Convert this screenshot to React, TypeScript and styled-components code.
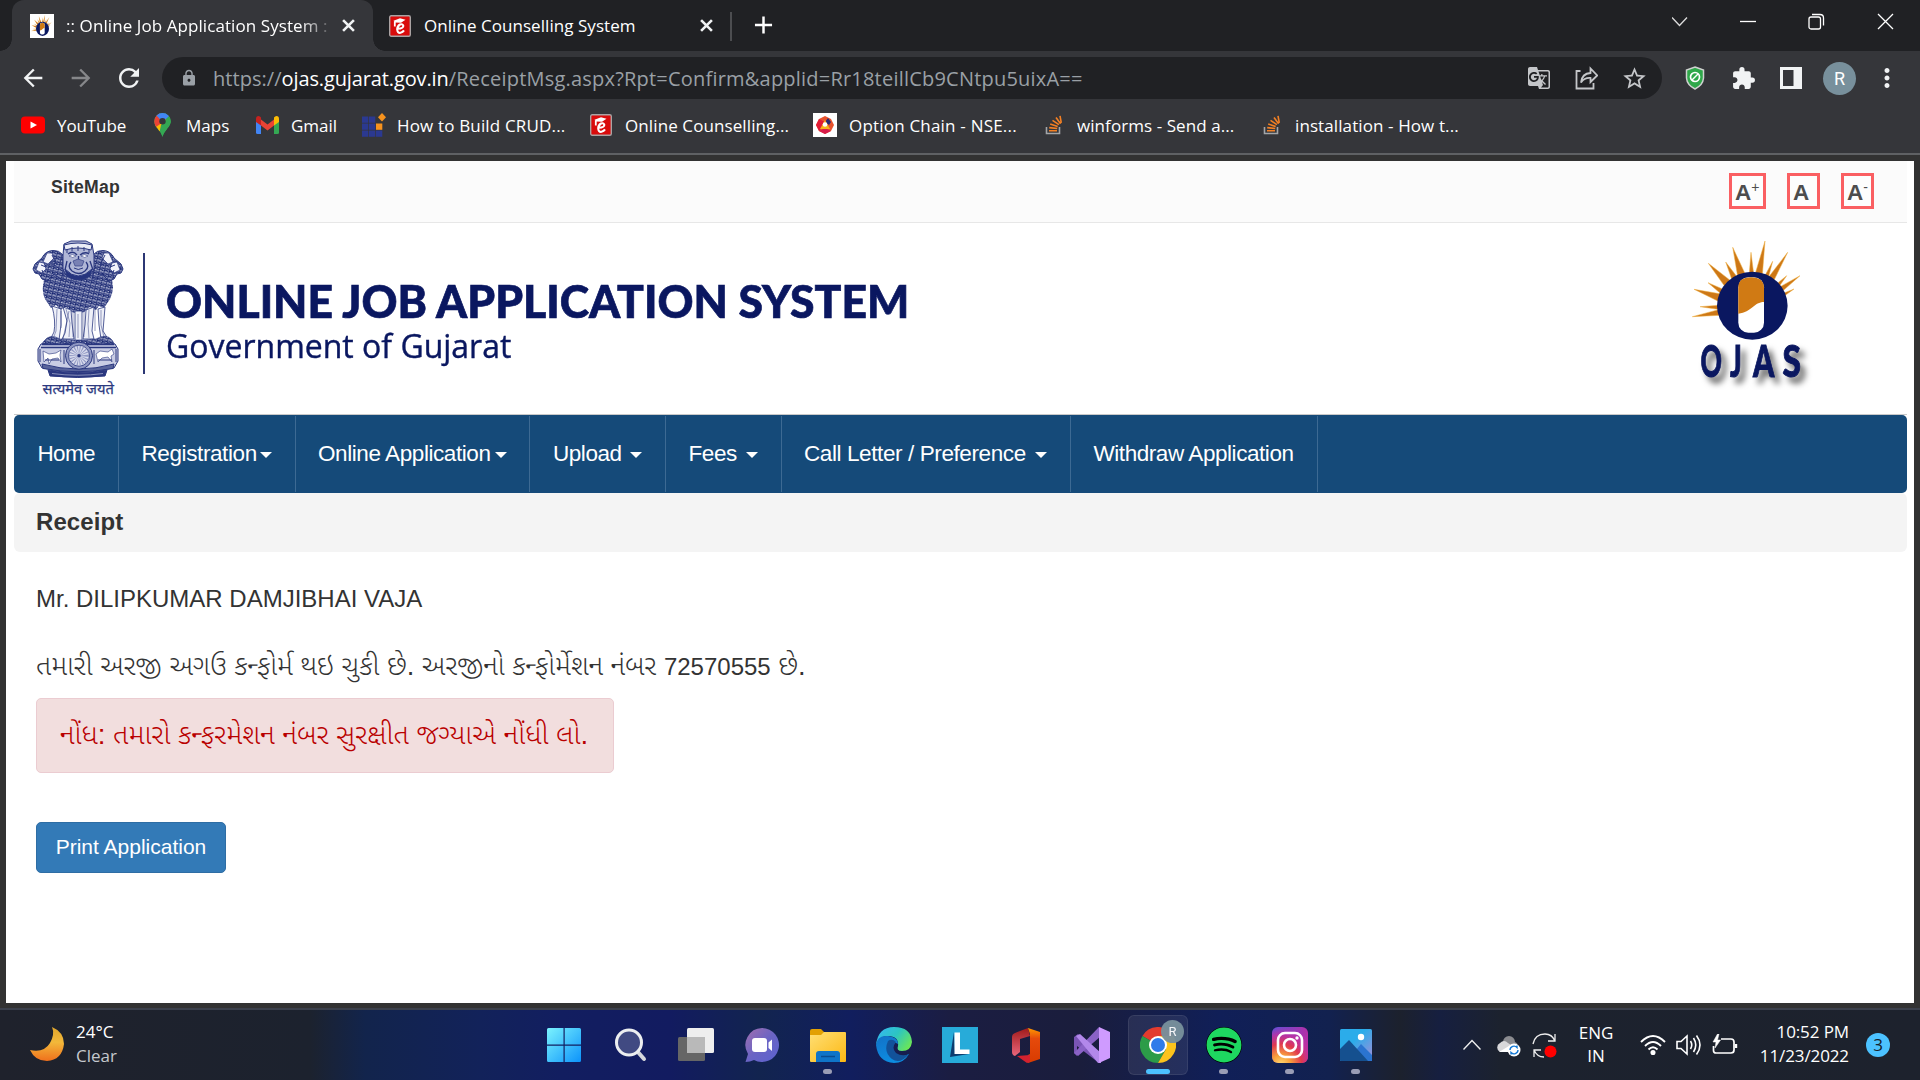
import React from "react";
import styled, { createGlobalStyle } from "styled-components";
import {
  MdArrowBack, MdArrowForward, MdRefresh, MdLock, MdGTranslate,
  MdStarBorder, MdExtension, MdMoreVert,
} from "react-icons/md";
import { FaSpotify } from "react-icons/fa";

const UI = `"Open Sans", "Noto Sans", sans-serif`;
const ARIAL = `"Liberation Sans", Arial, "Noto Sans Gujarati", "Noto Sans", sans-serif`;
const NAVY = "#0a1760";

const Global = createGlobalStyle`
  *, *::before, *::after { box-sizing: border-box; }
  html, body { margin: 0; padding: 0; overflow: hidden; background: #323232; }
  svg { display: block; flex: none; }
`;

const Screen = styled.div`
  width: 1920px;
  height: 1080px;
  display: flex;
  flex-direction: column;
  font-family: ${UI};
  color: #fff;
  background: #323232;
`;

/* ---------- browser tabs ---------- */
const TabStrip = styled.div`
  height: 51px;
  flex: none;
  display: flex;
  background: #202124;
  padding-left: 12px;
`;
const Tab = styled.div<{ $active?: boolean; $w: number; $pad: number }>`
  position: relative;
  width: ${(p) => p.$w}px;
  height: 51px;
  display: flex;
  align-items: center;
  padding-left: ${(p) => p.$pad}px;
  background: ${(p) => (p.$active ? "#35363a" : "transparent")};
  border-radius: 12px 12px 0 0;
  &::before, &::after {
    content: "";
    display: ${(p) => (p.$active ? "block" : "none")};
    position: absolute;
    bottom: 0;
    width: 12px;
    height: 12px;
  }
  &::before { left: -12px; background: radial-gradient(circle at 0 0, transparent 11.5px, #35363a 12px); }
  &::after { right: -12px; background: radial-gradient(circle at 100% 0, transparent 11.5px, #35363a 12px); }
`;
const TabTitle = styled.span<{ $w: number; $fade?: boolean; $ls?: number; $ml?: number }>`
  width: ${(p) => p.$w}px;
  margin-left: ${(p) => p.$ml ?? 12}px;
  font-size: 17px;
  line-height: 24px;
  letter-spacing: ${(p) => p.$ls ?? 0}px;
  white-space: nowrap;
  overflow: hidden;
  ${(p) => p.$fade && `mask-image: linear-gradient(90deg, #000 234px, transparent 270px);`}
`;
const StripDivider = styled.div`
  width: 2px;
  height: 29px;
  margin: 12px 22px 0 0;
  background: #4c4d50;
`;
const PlusWrap = styled.div`padding-top: 15px;`;
const WindowControls = styled.div`
  display: flex;
  align-items: flex-start;
  gap: 52px;
  margin-left: auto;
  padding: 13px 26px 0 0;
`;

/* ---------- toolbar ---------- */
const Toolbar = styled.div`
  height: 54px;
  flex: none;
  display: flex;
  align-items: center;
  padding-left: 19px;
  background: #35363a;
`;
const NavIcon = styled.div<{ $dim?: boolean; $w?: number }>`
  width: ${(p) => p.$w ?? 48}px;
  color: ${(p) => (p.$dim ? "#86878a" : "#f1f3f4")};
`;
const Omnibox = styled.div`
  width: 1500px;
  height: 42px;
  border-radius: 21px;
  background: #202124;
  display: flex;
  align-items: center;
  padding: 0 14px 0 18px;
  color: #9aa0a6;
`;
const Url = styled.div`
  flex: 1;
  margin-left: 15px;
  padding-top: 1px;
  font-size: 20px;
  line-height: 30px;
  letter-spacing: 0.21px;
  white-space: nowrap;
  span { letter-spacing: 0.04px; }
  b { font-weight: 400; color: #fff; letter-spacing: -0.12px; }
`;
const OmniIcons = styled.div`
  display: flex;
  align-items: center;
  gap: 23px;
  color: #c4c6c9;
`;
const Extensions = styled.div`
  display: flex;
  align-items: center;
  margin-left: 23px;
  color: #f1f3f4;
`;
const Slot = styled.div<{ $w: number }>`width: ${(p) => p.$w}px;`;
const Avatar = styled.div<{ $s: number; $fs: number }>`
  width: ${(p) => p.$s}px;
  height: ${(p) => p.$s}px;
  border-radius: 50%;
  background: #78909c;
  color: #fff;
  font: 400 ${(p) => p.$fs}px Roboto, sans-serif;
  display: flex;
  align-items: center;
  justify-content: center;
`;
const Bookmarks = styled.div`
  height: 48px;
  flex: none;
  display: flex;
  align-items: center;
  padding: 0 0 8px 21px;
  background: #35363a;
`;
const Bookmark = styled.div<{ $w: number }>`
  width: ${(p) => p.$w}px;
  height: 30px;
  display: flex;
  align-items: center;
`;
const BookIcon = styled.div<{ $w: number }>`width: ${(p) => p.$w}px; flex: none;`;
const BookText = styled.span<{ $ls?: number }>`
  font-size: 17px;
  letter-spacing: ${(p) => p.$ls ?? 0}px;
  white-space: nowrap;
`;
const ChromeEdge = styled.div`
  height: 8px;
  flex: none;
  border-top: 2px solid #5f6164;
  background: #323232;
`;

/* ---------- web page ---------- */
const Page = styled.main`
  width: 1908px;
  height: 842px;
  flex: none;
  margin-left: 6px;
  padding: 0 7px 0 8px;
  background: #fff;
  color: #333;
  font-family: ${ARIAL};
`;
const TopBar = styled.div`
  height: 62px;
  display: flex;
  justify-content: space-between;
  align-items: flex-start;
  background: #fbfbfb;
  border-bottom: 1px solid #e7e7e7;
  padding: 12px 33px 0 37px;
`;
const SiteMap = styled.a`
  font-size: 17.6px;
  line-height: 28px;
  font-weight: 700;
  letter-spacing: 0.2px;
`;
const SizeButtons = styled.div`display: flex; gap: 21px;`;
const SizeButton = styled.button<{ $w: number }>`
  width: ${(p) => p.$w}px;
  height: 36px;
  padding: 2px 0 0 3px;
  border: 3px solid #fa5f62;
  background: #fdfdfd;
  display: flex;
  align-items: flex-start;
  font: 700 22.5px/30px ${ARIAL};
  color: #4d4d4d;
  sup { font-size: 14px; line-height: 14px; font-weight: 400; margin-top: 2px; }
`;
const Banner = styled.header`
  height: 192px;
  display: flex;
  align-items: flex-start;
  padding-left: 18px;
  border-bottom: 1px solid #c9c9c9;
`;
const EmblemBox = styled.div`margin-top: 18px;`;
const Rule = styled.div`
  width: 2px;
  height: 121px;
  margin: 30px 0 0 18px;
  background: #2c3774;
`;
const TitleBlock = styled.div`
  flex: 1;
  margin: 54px 0 0 21px;
  color: ${NAVY};
  font-family: ${UI};
`;
const Title = styled.h1`
  margin: 0;
  font-family: Lato, ${UI};
  font-size: 45.5px;
  line-height: 48px;
  font-weight: 900;
  white-space: nowrap;
  transform-origin: 0 0;
  transform: scaleX(0.977);
  -webkit-text-stroke: 0.7px ${NAVY};
`;
const Subtitle = styled.h2`
  margin: 0;
  font-size: 33.5px;
  line-height: 40px;
  font-weight: 400;
  white-space: nowrap;
  transform-origin: 0 0;
  transform: scaleX(0.955);
  -webkit-text-stroke: 0.4px ${NAVY};
`;
const LogoBox = styled.div`margin: 17px 93px 0 0;`;

const NavBar = styled.nav`
  height: 78px;
  display: flex;
  padding: 1px 0;
  background: #154a79;
  border-radius: 5px;
`;
const NavItem = styled.a<{ $w: number; $pad: number; $gap: number; $ls: number }>`
  width: ${(p) => p.$w}px;
  display: flex;
  align-items: center;
  gap: ${(p) => p.$gap}px;
  padding: 0 0 1px ${(p) => p.$pad}px;
  border-right: 1px solid #3d6a93;
  color: #fff;
  font-size: 22.5px;
  letter-spacing: ${(p) => p.$ls}px;
  white-space: nowrap;
`;
const Caret = styled.i`
  margin-top: 3px;
  border: 6px solid transparent;
  border-top-color: #fff;
  border-bottom: 0;
`;
const Heading = styled.h3`
  height: 59px;
  margin: 0;
  padding-left: 22px;
  border-radius: 6px;
  background: #f4f4f4;
  font-size: 24px;
  line-height: 57px;
  font-weight: 700;
  letter-spacing: 0.08px;
`;
const Content = styled.section`
  display: flex;
  flex-direction: column;
  align-items: flex-start;
  padding: 30px 0 0 22px;
`;
const Line = styled.p<{ $mt?: number; $fs?: number }>`
  margin: ${(p) => p.$mt ?? 0}px 0 0;
  height: 33px;
  font-size: ${(p) => p.$fs ?? 24}px;
  line-height: 33px;
  font-weight: 300;
  white-space: nowrap;
`;
const Figure = styled.span`font-size: 24px;`;
const Alert = styled.div`
  width: 578px;
  height: 75px;
  margin-top: 16px;
  padding: 19px 0 0 23px;
  border: 1px solid #ebccd1;
  border-radius: 5px;
  background: #f2dede;
  color: #b90000;
`;
const Print = styled.button`
  width: 190px;
  height: 51px;
  margin-top: 49px;
  padding: 0 0 1px;
  border: 1px solid #2e6da4;
  border-radius: 5px;
  background: #337ab7;
  color: #fff;
  font: 400 21px ${ARIAL};
  white-space: nowrap;
`;

/* ---------- taskbar ---------- */
const PageFoot = styled.div`height: 5px; flex: none; background: #323232;`;
const Taskbar = styled.footer`
  height: 72px;
  flex: none;
  display: flex;
  align-items: center;
  border-top: 2px solid #3b404c;
  background: linear-gradient(90deg, #1f222c 0, #1c222e 310px, #12244c 365px, #12225a 480px, #121e60 560px,
    #121b60 670px, #12244f 760px, #111e5e 850px, #1b1d42 950px, #1a1d3c 1080px, #101f58 1220px, #12214f 1330px, #1c212d 1400px, #161f40 1440px, #1c222e 1500px, #1d222d 1920px);
`;
const Weather = styled.div`
  width: 534px;
  display: flex;
  align-items: center;
  padding: 0 0 2px 30px;
  gap: 12px;
  font-size: 17px;
  line-height: 24px;
  span { display: block; color: #c5c8cd; }
`;
const TaskButton = styled.div<{ $active?: boolean }>`
  position: relative;
  width: 60px;
  height: 60px;
  margin-right: 6px;
  display: flex;
  align-items: center;
  justify-content: center;
  border-radius: 6px;
  ${(p) => p.$active && `
    background: rgba(255,255,255,.08);
    box-shadow: inset 0 0 0 1px rgba(255,255,255,.08);`}
`;
const Running = styled.div<{ $on?: boolean }>`
  position: absolute;
  bottom: 1px;
  left: ${(p) => (p.$on ? 18 : 25)}px;
  width: ${(p) => (p.$on ? 24 : 9)}px;
  height: 5px;
  border-radius: 3px;
  background: ${(p) => (p.$on ? "#4cc2ff" : "#9a9db5")};
`;
const Badge = styled.div`position: absolute; right: 4px; top: 5px; opacity: .96;`;
const Tray = styled.div`
  margin-left: auto;
  display: flex;
  align-items: center;
  padding-right: 30px;
`;
const TrayText = styled.div<{ $w: number; $right?: boolean; $ls?: number }>`
  width: ${(p) => p.$w}px;
  padding-bottom: ${(p) => (p.$right ? 3 : 2)}px;
  font-size: 17px;
  line-height: ${(p) => (p.$right ? 24 : 23)}px;
  letter-spacing: ${(p) => p.$ls ?? -0.1}px;
  text-align: ${(p) => (p.$right ? "right" : "center")};
  white-space: nowrap;
`;
const Notice = styled.div`
  width: 24px;
  height: 24px;
  margin-left: 17px;
  border-radius: 50%;
  background: #4cc2ff;
  color: #14202c;
  font-size: 17px;
  line-height: 23px;
  text-align: center;
`;

/* ---------- drawings ---------- */
const RAYS: [number, number, number][] = [
  [75, 1, 3.6], [97.7, 12.3, 3.2], [110, 35.7, 2.6], [104, 49, 1.5], [96.7, 35.7, 1.8], [82.7, 21.3, 2],
  [61, 12.3, 2.2], [42.7, 7.3, 4], [35.7, 22, 3], [18.3, 23.3, 4.2], [18, 42.7, 2.6], [4, 49.3, 4],
  [10, 66.7, 2.2], [2.3, 76.7, 3],
];
const Rays = () => (
  <>
    {RAYS.map(([x, y, w], i) => {
      const a = Math.atan2(y - 64, x - 62.3);
      const bx = 62.3 + 33 * Math.cos(a);
      const by = 65.7 + 32 * Math.sin(a);
      const nx = -Math.sin(a) * w;
      const ny = Math.cos(a) * w;
      return (
        <path key={i} fill="#cd7716" stroke="#f0b040" strokeWidth=".5"
          d={`M${x} ${y}L${bx + nx} ${by + ny}L${bx - nx} ${by - ny}Z`} />
      );
    })}
  </>
);
const Sun = () => (
  <>
    <Rays />
    <ellipse cx="62.3" cy="65.7" rx="35.3" ry="34" fill={NAVY} />
    <rect x="48.3" y="37.3" width="25.7" height="55.5" rx="10" fill="#fff" />
    <path d="M48.3 73.7V47.3Q48.3 37.3 61 37.3T74 47.3V62C64 62 62 72 48.3 73.7Z" fill="#d07a14" />
  </>
);
const LogoWord = styled.g`
  filter: drop-shadow(5px 6px 3px rgba(0, 0, 0, 0.6));
  fill: ${NAVY};
  stroke: ${NAVY};
  stroke-width: 1px;
  font: 900 44px Lato, sans-serif;
`;
const OjasLogo = () => (
  <svg width="124" height="150" viewBox="0 0 124 150">
    <Sun />
    <LogoWord>
      <text transform="translate(10.500 137) scale(.6 1)">O</text>
      <text transform="translate(40 137) scale(.62 1)">J</text>
      <text transform="translate(63 137) scale(.69 1)">A</text>
      <text transform="translate(92.500 137) scale(.76 1)">S</text>
    </LogoWord>
  </svg>
);
const OjasFavicon = () => (
  <svg width="24" height="24" viewBox="0 0 24 24">
    <rect width="24" height="24" fill="#fff" />
    <g transform="translate(1 1) scale(.185 .21)"><Sun /></g>
  </svg>
);

const Emblem = () => (
  <svg width="93" height="157" viewBox="0 0 93 157" overflow="visible">
    <defs>
      <pattern id="fur" width="5" height="5" patternUnits="userSpaceOnUse" patternTransform="rotate(14)">
        <rect width="5" height="5" fill="#6d76ab" />
        <path d="M0 1Q1.2 3.6 2.5 1.4T5 1M0 3.8Q1.2 5.4 2.5 3.8T5 3.8M2.500 0V2" stroke="#18266f" strokeWidth="1.100" fill="none" />
        <path d="M.4 2.600h1.300M3 2.700h1.500M1 .2h.8" stroke="#fff" strokeWidth=".8" />
      </pattern>
    </defs>
    <g stroke="#2a377f" strokeWidth="1" strokeLinejoin="round">
      <path d="M14 33Q8 48 13 58L19 67 24 64 28 69 34 66 40 71 46 73 52 71 58 66 64 69 67 65 72 67 78 58Q84 46 78 33L64 20H29Z" fill="url(#fur)" stroke="none" />
      <path d="M31 14Q27 9 21 9.500Q13 10 10 17L3 23 1 28 3 32 7 33 10 38 15 40 22 33 31 40Z" fill="url(#fur)" />
      <path d="M61 14Q65 9 71 9.500Q79 10 82 17L89 23 91 28 89 32 85 33 82 38 77 40 70 33 61 40Z" fill="url(#fur)" />
      <path d="M15 12l5 0 2 5-6 6-5-2zM7 21l5 1 2 6-4 4-6-3zM77 12l-5 0-2 5 6 6 5-2zM85 21l-5 1-2 6 4 4 6-3z" fill="#f1f2fa" strokeWidth=".7" />
      <path d="M20 14l5 10M18 22l6 3M9 24l5 2M10 29l2 5M73 14l-5 10M74 22l-6 3M83 24l-5 2M82 29l-2 5" fill="none" />
      <path d="M32 3L39 0H54L60 3L62 14V28Q58 38 46 38T31 28V14Z" fill="#b0b6d6" />
      <path d="M32 4Q46 0 60 4L59 9Q46 5 33 9Z" fill="#e9ebf6" />
      <path d="M36 13q5-4 9 1M48 14q5-4 9-1M46.500 15v6M39 21q-4 5 1 9 7 5 13 0 5-4 1-9M35 20l-2 9M58 20l3 9" fill="none" strokeWidth="1.300" />
      <path d="M37 15q3-3 7 0-3 3-7 0zM49 15q3-3 7 0-3 3-7 0z" fill="#fff" strokeWidth=".6" />
      <path d="M41 20l5-2 6 2-2 5h-7z" fill="#7981b4" strokeWidth=".6" />
      <path d="M42 27q4 3 9 0" fill="none" />
      <path d="M33 28Q46 42 60 28L58 35Q46 43 35 35Z" fill="#26347f" />
      <path d="M35 8v4M40 6v4M46 5v5M52 6v4M57 8v4" />
      <path d="M20 65Q24 80 22 91L18 99H27L29 84V68ZM31 66L35 80 33 92 30 98H42L40 82 39 69ZM43 70V101H50V70ZM54 69L53 84 51 98H62L60 90 62 66ZM66 68L67 84 69 98H76L71 90 73 66Z" fill="#eef0f8" strokeWidth=".8" />
      <path d="M25 68l-1 22-3 8M34 68l4 14-1 14M46 73v24M57 69l-1 14 1 14M69 69v15l3 12M37 70l-6 28M29 70v17M63 68v22M52 70v26M41 70v26" fill="none" strokeWidth=".8" opacity=".6" />
      <path d="M12 100Q18 92 28 98L42 99H52L64 98Q74 92 80 99L83 104H9Z" fill="url(#fur)" strokeWidth=".6" />
      <path d="M9 103H83L86 108V120L82 127Q46 134 10 127L6 120V108Z" fill="#c9cde4" />
      <path d="M10 103.500H82M9 106.500H84" strokeWidth="1.600" />
      <path d="M10 123Q46 133 82 123L81 127.500Q46 134 11 127.500Z" fill="#5a659c" />
      <path d="M11 110l6 3 7-1 5-3-1 5 1 7-3-4-6 1-3 5-1-6-4 4zM64 113l4-3 8 1 4-3 2 5-3 2 1 6-4-5-6 1-4 4z" fill="#fff" strokeWidth=".6" />
      <path d="M8 108v13M84 108v13M32 109v14M62 109v14M13 119h14M66 119h14" fill="none" />
      <circle cx="47" cy="114.700" r="13.500" fill="#8f97c2" />
      <circle cx="47" cy="114.700" r="10.500" fill="#d7daec" strokeWidth=".8" />
      <circle cx="47" cy="114.700" r="6" fill="none" stroke="#9098c4" strokeWidth="8" strokeDasharray=".8 1.200" />
      <circle cx="47" cy="114.700" r="1.600" fill="#2a377f" strokeWidth=".4" />
      <path d="M16 129Q46 134 75 129L73 135Q46 138 18 135Z" fill="#2a377f" />
      <path d="M20 132.500Q46 136 71 132.500" stroke="#8890ba" fill="none" />
    </g>
    <text x="10.500" y="153" textLength="71.500" lengthAdjust="spacingAndGlyphs" fill="#2c3980" stroke="#2c3980" strokeWidth=".25"
      fontSize="14.500" fontFamily="Noto Sans Devanagari, Noto Sans, sans-serif">सत्यमेव जयते</text>
  </svg>
);

const Close = ({ s = 12, w = 2.4 }: { s?: number; w?: number }) => (
  <svg width={s} height={s} viewBox="0 0 12 12" stroke="#f1f3f4" strokeWidth={w}><path d="M1 1L11 11M11 1L1 11" /></svg>
);
const Counselling = () => (
  <svg width="22" height="22" viewBox="0 0 22 22">
    <rect x=".7" y=".7" width="20.600" height="20.600" rx="1.500" fill="#d90b0b" stroke="#aaa3a3" strokeWidth="1.400" />
    <path d="M4.500 5.800L11 3.200l5.500 1.600-4.500 3-6-.3z" fill="#fff" />
    <path d="M5.800 6.500v5" stroke="#fff" strokeWidth="1.800" />
    <path d="M8.500 13.800Q14.500 13.300 14.300 10.800 13.600 8.600 11 9.500 8.200 11.200 8.200 14.500 8.500 18.300 11.500 17.800 13.800 17.300 15 15.400" fill="none" stroke="#fff" strokeWidth="2.100" />
  </svg>
);
const Youtube = () => (
  <svg width="24" height="24" viewBox="0 0 24 24"><rect y="3.500" width="24" height="17" rx="4" fill="#f00" /><path d="M9.500 8.500L16 12l-6.500 3.500z" fill="#fff" /></svg>
);
const MapsPin = () => (
  <svg width="17" height="24" viewBox="0 0 17 24">
    <clipPath id="pin"><path d="M8.500 0A8.300 8.300 0 0 0 .2 8.300C.2 14 6.500 17 8.500 24 10.500 17 16.800 14 16.800 8.300A8.300 8.300 0 0 0 8.500 0Z" /></clipPath>
    <g clipPath="url(#pin)">
      <rect width="17" height="24" fill="#34a853" />
      <path d="M0 14L9 4 14 8 3 21H0Z" fill="#fbbc04" />
      <path d="M0 0H5L9 9 2 14H0Z" fill="#ea4335" />
      <path d="M2 2L8.500 9 15.500 3 12-1H4Z" fill="#4285f4" />
      <path d="M7 12L15.500 2.500 18 8 8 24 6 17Z" fill="#34a853" />
    </g>
    <circle cx="8.500" cy="8.300" r="3.200" fill="#35363a" />
  </svg>
);
const Gmail = () => (
  <svg width="23" height="18" viewBox="0 0 23 18">
    <path d="M0 3V16.500Q0 18 1.500 18H5V7Z" fill="#4285f4" /><path d="M23 3V16.500Q23 18 21.500 18H18V7Z" fill="#34a853" />
    <path d="M5 3.500L11.500 8.500 18 3.500V9.500L11.500 14.500 5 9.500Z" fill="#ea4335" />
    <path d="M0 3Q0 0 2.500 0 4 .2 5 1.500V9.500L0 6Z" fill="#c5221f" /><path d="M23 3Q23 0 20.500 0 19 .2 18 1.500V9.500L23 6Z" fill="#fbbc04" />
  </svg>
);
const Crud = () => (
  <svg width="24" height="24" viewBox="0 0 24 24">
    {[3.5, 10.5, 17.5].map((y, r) => [0, 7, 14].map((x, c) => (
      <rect key={`${x}-${y}`} x={x} y={y} width="6.300" height="6.300"
        fill={c === 2 && r === 1 ? "#f7931e" : c === 2 && r === 0 ? "none" : "#2b3990"} />
    )))}
    <path d="M20 0l4 4.300-4 4.300-4-4.300z" fill="#f7931e" />
  </svg>
);
const Nse = () => (
  <svg width="24" height="24" viewBox="0 0 24 24">
    <rect width="24" height="24" fill="#fff" />
    <path d="M12 3l6 3 3 6-3 6-6 3-6-3-3-6 3-6z" fill="#e8532d" />
    <path d="M6 6l6 3-3 6-3 3-3-6z" fill="#e21b35" /><path d="M6 18l6 3 6-3-6-3z" fill="#d81d4b" />
    <path d="M12 9l3-4 3 4-2 3z" fill="#2a2a72" /><path d="M7 16l5-9 5 9z" fill="#f8b21c" />
    <circle cx="12" cy="11.500" r="2.300" fill="#fff" />
  </svg>
);
const Stack = () => (
  <svg width="18" height="20" viewBox="0 0 18 20" fill="none">
    <path d="M1.500 12v6.500h13V12" stroke="#a3a6a9" strokeWidth="1.600" />
    <path d="M4 15.700h8M4.200 12.600l8 .9M5.200 9.100l7.500 2.300M7.500 5.300l6.400 4.300M11 2.500l4.600 6.200M15 .8l1.300 7" stroke="#f48024" strokeWidth="1.600" />
  </svg>
);

const StartIcon = () => (
  <svg width="34" height="34" viewBox="0 0 34 34">
    <defs><linearGradient id="win" gradientUnits="userSpaceOnUse" x1="0" y1="0" x2="34" y2="34"><stop stopColor="#7bf3fe" /><stop offset="1" stopColor="#0c93fb" /></linearGradient></defs>
    <path d="M1.500 0H16.500V16.500H0V1.500Q0 0 1.500 0ZM17.700 0H32.500Q34 0 34 1.500V16.500H17.700ZM0 17.700H16.500V34H1.500Q0 34 0 32.500ZM17.700 17.700H34V32.500Q34 34 32.500 34H17.700Z" fill="url(#win)" />
  </svg>
);
const SearchIcon = () => (
  <svg width="34" height="34" viewBox="0 0 34 34"><path d="M24 23L31 31" stroke="#d5d7db" strokeWidth="4" strokeLinecap="round" /><circle cx="16" cy="14.500" r="12.500" fill="#414a82" stroke="#eceef0" strokeWidth="3" /></svg>
);
const TaskView = () => (
  <svg width="36" height="34" viewBox="0 0 36 34"><rect y="9" width="27" height="24" rx="1.500" fill="#666" /><rect x="9" width="27" height="25" rx="1.500" fill="#eee" /><path d="M9 9H27V25H9Z" fill="#b9b9b9" /></svg>
);
const Chat = () => (
  <svg width="34" height="34" viewBox="0 0 34 34">
    <defs><linearGradient id="cht" x1="0" y1="0" x2="1" y2="1"><stop stopColor="#a26fae" /><stop offset=".5" stopColor="#6a64c4" /><stop offset="1" stopColor="#5b62d0" /></linearGradient></defs>
    <path d="M17 0a17 17 0 1 1-8 32q-4 2-8.500 2L3 26A17 17 0 0 1 17 0Z" fill="url(#cht)" />
    <rect x="7" y="10" width="15" height="14" rx="3" fill="#fff" /><path d="M23.500 14.500l3.500-3v11.500l-3.500-3z" fill="#fff" />
  </svg>
);
const Explorer = () => (
  <svg width="36" height="33" viewBox="0 0 36 33">
    <defs><linearGradient id="fol" x1="0" y1="0" x2="1" y2="1"><stop stopColor="#ffdf75" /><stop offset="1" stopColor="#fcb813" /></linearGradient></defs>
    <path d="M0 8V2Q0 0 2 0H11L15 4V8Z" fill="#e2a003" /><path d="M0 6H11L14 3H35Q36 3 36 4V32Q36 33 35 33H1Q0 33 0 32Z" fill="url(#fol)" />
    <path d="M6 33V25Q6 22 9 22H27Q30 22 30 25V33Z" fill="#0f74c8" /><path d="M11 27.500H25" stroke="#0a4c90" strokeWidth="1.500" />
  </svg>
);
const Edge = () => (
  <svg width="36" height="36" viewBox="0 0 36 36">
    <defs>
      <linearGradient id="e1" x1="0" y1=".2" x2="1" y2=".7"><stop stopColor="#35b8f0" /><stop offset=".5" stopColor="#2cc5c2" /><stop offset="1" stopColor="#6ce755" /></linearGradient>
      <linearGradient id="e2" x1="0" y1="0" x2=".3" y2="1"><stop stopColor="#1272c8" /><stop offset="1" stopColor="#0d8ce0" /></linearGradient>
    </defs>
    <path d="M0 18Q2 0 18 0 35 0 36 15 35 24 26 24 20 24 22 19 23 9 12 9 3 9 0 18Z" fill="url(#e1)" />
    <path d="M0 18Q1 8 12 9 22 10 22 17 18 14 15 17 11 22 16 28 21 33 33 27 28 36 18 36 2 35 0 18Z" fill="url(#e2)" />
    <path d="M12 14Q7 25 16 32 24 38 33 27 26 30 20 26 15 21 20 15 16 11 12 14Z" fill="#12529a" />
  </svg>
);
const LIcon = () => (
  <svg width="36" height="36" viewBox="0 0 36 36"><rect width="36" height="36" fill="#27abd9" /><path d="M12 5L8 30 27 27 13 26Z" fill="#0d3c6e" /><path d="M12.500 5.500H18V22.500H27.500V27H12.500Z" fill="#fff" /></svg>
);
const Office = () => (
  <svg width="28" height="35" viewBox="0 0 28 35">
    <defs><linearGradient id="of" x1="0" y1="0" x2="0" y2="1"><stop stopColor="#ff9a00" /><stop offset=".3" stopColor="#e64a0b" /><stop offset="1" stopColor="#d83b01" /></linearGradient>
      <linearGradient id="of2" x1="0" y1="0" x2="0" y2="1"><stop stopColor="#a01a1a" /><stop offset="1" stopColor="#e9667c" /></linearGradient></defs>
    <path d="M16 0L18 8 8 11V24L3 28Q0 27 0 24V9Q0 6 3 5Z" fill="url(#of2)" /><path d="M16 0L28 4V31L16 35V27L18 26V6Z" fill="url(#of)" /><path d="M5 28L18 27V34L15 35Z" fill="#d3222f" />
  </svg>
);
const VisualStudio = () => (
  <svg width="36" height="36" viewBox="0 0 36 36">
    <path d="M0 10L4 7 26 28 25 36 3 19V29L0 26Z" fill="#7a55b5" /><path d="M0 26L25 0 27 9 4 29Z" fill="#8a62c6" /><path d="M2 9L6 7 27 26V36H24Z" fill="#b288ea" /><path d="M25 0L36 5V31L25 36Z" fill="#cf9bff" />
  </svg>
);
const Chrome = () => (
  <svg width="36" height="36" viewBox="0 0 36 36">
    <path d="M18 18L2.400 9A18 18 0 0 1 33.600 9Z" fill="#e33b2e" /><path d="M18 18L2.400 9A18 18 0 0 0 18 36L25.800 22.500Z" fill="#2c9c48" />
    <path d="M18 9H33.600A18 18 0 0 1 18 36L25.800 22.500Z" fill="#fcc31c" /><circle cx="18" cy="18" r="9" fill="#fff" /><circle cx="18" cy="18" r="7" fill="#2f7bea" />
  </svg>
);
const Spotify = styled(FaSpotify)`background: #000; border-radius: 50%; color: #1ed760;`;
const Insta = () => (
  <svg width="36" height="36" viewBox="0 0 36 36">
    <defs>
      <linearGradient id="ig0" x1="0" y1="0" x2="1" y2="0"><stop stopColor="#5b51d8" /><stop offset="1" stopColor="#b42fa8" /></linearGradient>
      <radialGradient id="ig1" cx=".25" cy="1.050" r="1.050"><stop stopColor="#fedc77" /><stop offset=".25" stopColor="#f9a23c" /><stop offset=".55" stopColor="#e0394f" /><stop offset=".8" stopColor="#c430a0" stopOpacity=".8" /><stop offset="1" stopColor="#c430a0" stopOpacity="0" /></radialGradient>
    </defs>
    <rect width="36" height="36" rx="6" fill="url(#ig0)" /><rect width="36" height="36" rx="6" fill="url(#ig1)" />
    <g fill="none" stroke="#fff" strokeWidth="2.600"><rect x="6" y="6" width="24" height="24" rx="7" /><circle cx="18" cy="18" r="6" /></g><circle cx="25" cy="11" r="1.700" fill="#fff" />
  </svg>
);
const Photos = () => (
  <svg width="32" height="32" viewBox="0 0 32 32">
    <defs><linearGradient id="ph" x1="0" y1="0" x2="1" y2="1"><stop offset=".4" stopColor="#2bacea" /><stop offset="1" stopColor="#a68cd8" /></linearGradient></defs>
    <rect width="32" height="32" rx="1.500" fill="url(#ph)" /><path d="M12 26L21 15 32 26V32H12Z" fill="#2b74d0" /><path d="M0 20L9 11 28 32H1Q0 32 0 31Z" fill="#15508f" /><circle cx="21" cy="8" r="3.200" fill="#fff" />
  </svg>
);

const bookmarks: { icon: React.ReactNode; iw: number; w: number; text: string; ls?: number }[] = [
  { icon: <Youtube />, iw: 36, w: 133, text: "YouTube", ls: -0.1 },
  { icon: <MapsPin />, iw: 32, w: 102, text: "Maps" },
  { icon: <Gmail />, iw: 35, w: 106, text: "Gmail" },
  { icon: <Crud />, iw: 35, w: 228, text: "How to Build CRUD...", ls: 0.16 },
  { icon: <Counselling />, iw: 35, w: 223, text: "Online Counselling...", ls: 0.1 },
  { icon: <Nse />, iw: 36, w: 232, text: "Option Chain - NSE...", ls: 0.2 },
  { icon: <Stack />, iw: 32, w: 218, text: "winforms - Send a...", ls: 0.07 },
  { icon: <Stack />, iw: 32, w: 200, text: "installation - How t...", ls: 0.1 },
];

const navItems = [
  { t: "Home", w: 105, pad: 23.5, gap: 0, ls: -0.65, caret: false },
  { t: "Registration", w: 177, pad: 22.5, gap: 3, ls: -0.4, caret: true },
  { t: "Online Application", w: 234, pad: 22, gap: 4, ls: -0.42, caret: true },
  { t: "Upload", w: 136, pad: 23, gap: 8, ls: -0.45, caret: true },
  { t: "Fees", w: 116, pad: 22.5, gap: 9, ls: -0.4, caret: true },
  { t: "Call Letter / Preference", w: 289, pad: 22, gap: 9, ls: -0.4, caret: true },
  { t: "Withdraw Application", w: 247, pad: 22.5, gap: 0, ls: -0.44, caret: false },
];

const apps: { icon: React.ReactNode; run?: boolean; active?: boolean }[] = [
  { icon: <StartIcon /> }, { icon: <SearchIcon /> }, { icon: <TaskView /> }, { icon: <Chat /> },
  { icon: <Explorer />, run: true }, { icon: <Edge /> }, { icon: <LIcon /> }, { icon: <Office /> },
  { icon: <VisualStudio /> }, { icon: <Chrome />, run: true, active: true },
  { icon: <Spotify size={36} />, run: true }, { icon: <Insta />, run: true }, { icon: <Photos />, run: true },
];

export default function App() {
  return (
    <Screen>
      <Global />
      <TabStrip>
        <Tab $active $w={361} $pad={18}>
          <OjasFavicon />
          <TabTitle $w={276} $fade $ls={0.08}>:: Online Job Application System :</TabTitle>
          <Slot $w={12}><Close s={13} /></Slot>
        </Tab>
        <Tab $w={357} $pad={16}>
          <Counselling />
          <TabTitle $w={276} $ml={13} $ls={0.05}>Online Counselling System</TabTitle>
          <Close s={13} />
        </Tab>
        <StripDivider />
        <PlusWrap><svg width="19" height="20" viewBox="0 0 20 20" stroke="#fff" strokeWidth="2.600"><path d="M10 1V19M1 10H19" /></svg></PlusWrap>
        <WindowControls>
          <svg width="16" height="16" viewBox="0 0 16 16" fill="none" stroke="#ddd" strokeWidth="1.300"><path d="M0 4.500L7.500 12.500 15 4.500" /></svg>
          <svg width="16" height="16" viewBox="0 0 16 16" stroke="#fff" strokeWidth="1.300"><path d="M0 8.500H16" /></svg>
          <svg width="17" height="17" viewBox="0 0 17 17" fill="none" stroke="#fff" strokeWidth="1.300"><rect x="1" y="4" width="11.500" height="12" rx="2" /><path d="M4 1.500H12Q15.500 1.500 15.500 5V12.500" /></svg>
          <svg width="17" height="17" viewBox="0 0 17 17" stroke="#fff" strokeWidth="1.300"><path d="M1 1L16 16M16 1L1 16" /></svg>
        </WindowControls>
      </TabStrip>

      <Toolbar>
        <NavIcon><MdArrowBack size={28} /></NavIcon>
        <NavIcon $dim $w={47}><MdArrowForward size={28} /></NavIcon>
        <NavIcon><MdRefresh size={30} /></NavIcon>
        <Omnibox>
          <MdLock size={18} />
          <Url><span>https://<b>ojas.gujarat.gov.in</b></span>/ReceiptMsg.aspx?Rpt=Confirm&amp;applid=Rr18teillCb9CNtpu5uixA==</Url>
          <OmniIcons>
            <MdGTranslate size={24} />
            <svg width="24" height="24" viewBox="0 0 24 24" fill="none" stroke="currentColor" strokeWidth="1.800">
              <path d="M6.500 5H2.500V22.500H19.500V17M7 16.500Q8 7.500 16.500 7V2.500L23.200 9.500 16.500 16V12Q10.500 11.500 7 16.500Z" />
            </svg>
            <MdStarBorder size={27} />
          </OmniIcons>
        </Omnibox>
        <Extensions>
          <Slot $w={46}>
            <svg width="20" height="24" viewBox="0 0 20 24"><path d="M10 1L18.500 4V12Q18 19 10 23 2 19 1.500 12V4Z" fill="#2fa84a" stroke="#cfd2d0" strokeWidth="1.500" /><circle cx="10" cy="11" r="4.500" fill="none" stroke="#fff" strokeWidth="1.700" /><path d="M7 14l6-6" stroke="#fff" strokeWidth="1.500" /></svg>
          </Slot>
          <Slot $w={49}><MdExtension size={25} /></Slot>
          <Slot $w={43}><svg width="22" height="22" viewBox="0 0 22 22"><path d="M0 0H22V22H0ZM3 3V19H13.500V3Z" fill="#f1f3f4" fillRule="evenodd" /></svg></Slot>
          <Slot $w={49}><Avatar $s={33} $fs={18}>R</Avatar></Slot>
          <MdMoreVert size={30} />
        </Extensions>
      </Toolbar>

      <Bookmarks>
        {bookmarks.map((b, i) => (
          <Bookmark key={i} $w={b.w}>
            <BookIcon $w={b.iw}>{b.icon}</BookIcon>
            <BookText $ls={b.ls}>{b.text}</BookText>
          </Bookmark>
        ))}
      </Bookmarks>
      <ChromeEdge />

      <Page>
        <TopBar>
          <SiteMap>SiteMap</SiteMap>
          <SizeButtons>
            <SizeButton $w={37}>A<sup>+</sup></SizeButton>
            <SizeButton $w={33}>A</SizeButton>
            <SizeButton $w={33}>A<sup>-</sup></SizeButton>
          </SizeButtons>
        </TopBar>
        <Banner>
          <EmblemBox><Emblem /></EmblemBox>
          <Rule />
          <TitleBlock>
            <Title>ONLINE JOB APPLICATION SYSTEM</Title>
            <Subtitle>Government of Gujarat</Subtitle>
          </TitleBlock>
          <LogoBox><OjasLogo /></LogoBox>
        </Banner>
        <NavBar>
          {navItems.map((n) => (
            <NavItem key={n.t} $w={n.w} $pad={n.pad} $gap={n.gap} $ls={n.ls}>{n.t}{n.caret && <Caret />}</NavItem>
          ))}
        </NavBar>
        <Heading>Receipt</Heading>
        <Content>
          <Line>Mr. DILIPKUMAR DAMJIBHAI VAJA</Line>
          <Line $mt={34} $fs={27.4}>તમારી અરજી અગઉ કન્ફોર્મ થઇ ચુકી છે. અરજીનો કન્ફોર્મેશન નંબર <Figure>72570555</Figure> છે.</Line>
          <Alert><Line $fs={27.7}>નોંધ: તમારો કન્ફરમેશન નંબર સુરક્ષીત જગ્યાએ નોંધી લો.</Line></Alert>
          <Print>Print Application</Print>
        </Content>
      </Page>
      <PageFoot />

      <Taskbar>
        <Weather>
          <svg width="34" height="36" viewBox="0 0 34 36">
            <defs><linearGradient id="moon" x1="0" y1="0" x2="0" y2="1"><stop stopColor="#e0a52c" /><stop offset=".45" stopColor="#f2b83a" /><stop offset="1" stopColor="#f0701c" /></linearGradient></defs>
            <path d="M22 1Q34 6 34 18 32 34 17 35 5 35 0 24 14 27 20 17 25 8 22 1Z" fill="url(#moon)" />
          </svg>
          <div>24°C<span>Clear</span></div>
        </Weather>
        {apps.map((a, i) => (
          <TaskButton key={i} $active={a.active}>
            {a.icon}
            {a.active && <Badge><Avatar $s={23} $fs={13}>R</Avatar></Badge>}
            {a.run && <Running $on={a.active} />}
          </TaskButton>
        ))}
        <Tray>
          <Slot $w={33}><svg width="18" height="12" viewBox="0 0 18 12" fill="none" stroke="#eee" strokeWidth="1.400"><path d="M.5 10.500L9 1.500 17.500 10.500" /></svg></Slot>
          <Slot $w={36}>
            <svg width="26" height="26" viewBox="0 0 26 26"><path d="M7 10a6 6 0 0 1 12 0q3 1 3 5H8z" fill="#8b8c90" /><path d="M4 20a5 5 0 0 1 0-9q4-4 8 0l6 4v5z" fill="#d8d8da" /><path d="M3 20l10-6 5 6z" fill="#fff" /><circle cx="18" cy="18" r="6.500" fill="#fff" /><path d="M14 18a4 4 0 0 1 7-2.500v-2M22 18a4 4 0 0 1-7 2.500v2" fill="none" stroke="#1478d4" strokeWidth="1.400" /></svg>
          </Slot>
          <Slot $w={43}>
            <svg width="26" height="26" viewBox="0 0 26 26" fill="none" stroke="#eee" strokeWidth="1.300"><path d="M1 12Q3 2 13 2 20 2 23 9M23 2V9H16M2 25V18H9M2 18Q5 25 12 25" /><circle cx="18.500" cy="19.500" r="6" fill="#f00" stroke="none" /></svg>
          </Slot>
          <TrayText $w={42}>ENG<br />IN</TrayText>
          <Slot $w={23} />
          <Slot $w={36}>
            <svg width="26" height="22" viewBox="0 0 26 22" fill="none" stroke="#fff" strokeWidth="1.900"><path d="M1 8Q13-4 25 8M5 12Q13 4 21 12M8.500 15.500Q13 11 17.500 15.500" /><circle cx="13" cy="18.500" r="1.600" fill="#fff" /></svg>
          </Slot>
          <Slot $w={36}>
            <svg width="26" height="22" viewBox="0 0 26 22" fill="none" stroke="#fff" strokeWidth="1.600"><path d="M1 7.500H5L11 2V20L5 14.500H1ZM14.500 7Q17 11 14.500 15M17.500 4Q22 11 17.500 18M20.500 1.500Q27.500 11 20.500 20.500" /></svg>
          </Slot>
          <Slot $w={33}>
            <svg width="26" height="22" viewBox="0 0 26 22" fill="none" stroke="#fff" strokeWidth="1.700"><path d="M9 5H19Q22 5 22 8V16Q22 19 19 19H4Q1.500 19 1.500 16.500V12" /><path d="M24 10V14" strokeWidth="2.400" /><path d="M5.500 0L1 8H4L3 14 8.500 6H5.500L7 0Z" fill="#fff" strokeWidth=".5" /></svg>
          </Slot>
          <TrayText $w={104} $right>10:52 PM<br />11/23/2022</TrayText>
          <Notice>3</Notice>
        </Tray>
      </Taskbar>
    </Screen>
  );
}
